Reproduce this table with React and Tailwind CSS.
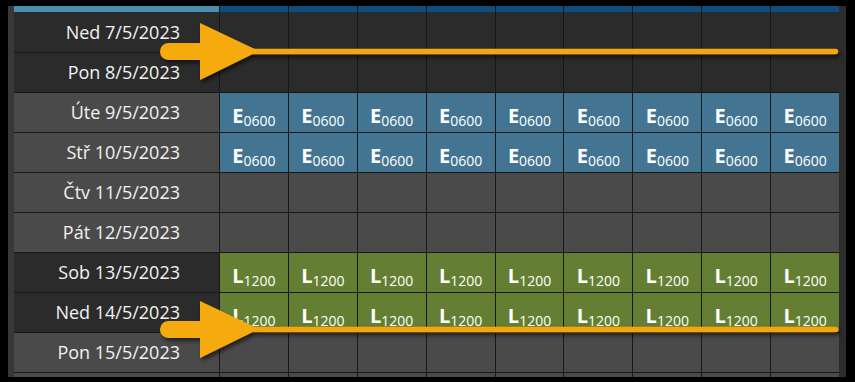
const ROWS = [
  { label: 'Ned 7/5/2023', dark: true, shift: null },
  { label: 'Pon 8/5/2023', dark: true, shift: null },
  { label: 'Úte 9/5/2023', dark: false, shift: 'E' },
  { label: 'Stř 10/5/2023', dark: false, shift: 'E' },
  { label: 'Čtv 11/5/2023', dark: false, shift: null },
  { label: 'Pát 12/5/2023', dark: false, shift: null },
  { label: 'Sob 13/5/2023', dark: true, shift: 'L' },
  { label: 'Ned 14/5/2023', dark: true, shift: 'L' },
  { label: 'Pon 15/5/2023', dark: false, shift: null },
]

const SHIFTS = {
  E: { time: '0600', bg: 'bg-[#437593]' },
  L: { time: '1200', bg: 'bg-[#647f33]' },
}

const COLS = Array.from({ length: 9 })

function ShiftCell({ code }) {
  const s = SHIFTS[code]
  return (
    <div className={`flex-1 border-l border-[#171717] ${s.bg} flex items-center justify-center pt-[7px]`}>
      <span className="text-[20px] font-bold leading-none text-white">{code}</span>
      <span className="text-[14px] leading-none text-white mt-[9px]">{s.time}</span>
    </div>
  )
}

function Row({ row, first }) {
  const rowBg = row.dark ? 'bg-[#2b2b2b]' : 'bg-[#4a4a4a]'
  return (
    <div className={`flex h-[40px] shrink-0 ${first ? '' : 'border-t border-[#171717]'}`}>
      <div className={`w-[205px] shrink-0 ${rowBg} flex items-center justify-end pr-[39px] text-[18px] text-[#f2f2f2]`}>
        {row.label}
      </div>
      {COLS.map((_, i) =>
        row.shift ? (
          <ShiftCell key={i} code={row.shift} />
        ) : (
          <div key={i} className={`flex-1 border-l border-[#171717] ${rowBg}`} />
        )
      )}
    </div>
  )
}

// big orange callout arrow, drawn once and reused with a y offset
function Arrow({ dy }) {
  return (
    <g transform={`translate(0 ${dy})`} filter="url(#arrowShadow)">
      <line x1="240" y1="51.5" x2="835.5" y2="51.5" stroke="#f3a709" strokeWidth="5.5" strokeLinecap="round" />
      <rect x="160" y="43" width="52" height="17" rx="8.5" fill="#f5ab0a" />
      <polygon points="200,23 259,51 200,80" fill="#f5ab0a" />
    </g>
  )
}

export default function App() {
  return (
    <div
      className="relative w-[855px] h-[382px] bg-black pl-[8px] pt-[6px] overflow-hidden"
      style={{ fontFamily: '"Open Sans", "Noto Sans", sans-serif' }}
    >
      <div className="flex h-[371px]">
        <div className="w-[6px] bg-[#383838]" />
        <div className="w-[825px] flex flex-col overflow-hidden">
          {/* header strip */}
          <div className="flex h-[6px] shrink-0">
            <div className="w-[205px] shrink-0 bg-[#4b8fad]" />
            {COLS.map((_, i) => (
              <div key={i} className="flex-1 border-l border-[#171717] bg-[#0f4c81]" />
            ))}
          </div>
          {ROWS.map((r, i) => (
            <Row key={i} row={r} first={i === 0} />
          ))}
          <div className="flex h-[10px] shrink-0 border-t border-[#171717]">
            <div className="w-[205px] shrink-0 bg-[#4a4a4a]" />
            {COLS.map((_, i) => (
              <div key={i} className="flex-1 border-l border-[#171717] bg-[#4a4a4a]" />
            ))}
          </div>
        </div>
        <div className="w-[7px] bg-[#2c2c2c]" />
      </div>

      <svg className="absolute left-0 top-0 pointer-events-none" width="855" height="382" viewBox="0 0 855 382">
        <defs>
          <filter id="arrowShadow" x="-10%" y="-50%" width="120%" height="200%">
            <feDropShadow dx="2" dy="3" stdDeviation="2" floodColor="#000" floodOpacity="0.6" />
          </filter>
        </defs>
        <Arrow dy={0} />
        <Arrow dy={278} />
      </svg>
    </div>
  )
}
